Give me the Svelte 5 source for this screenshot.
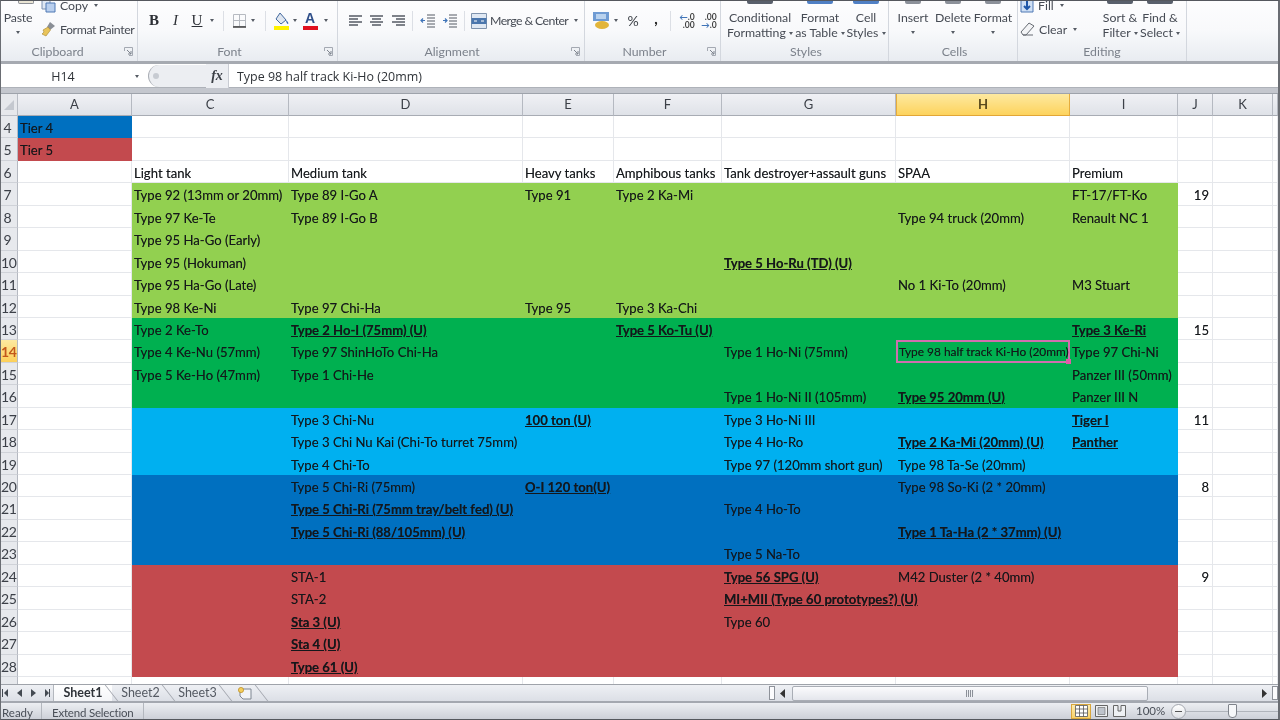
<script>
  const columns = ["A", "C", "D", "E", "F", "G", "H", "I", "J", "K", ""];

  // leading "!" means bold + underlined in the sheet
  const rows = [
    { n: 4, A: "Tier 4" },
    { n: 5, A: "Tier 5" },
    { n: 6, C: "Light tank", D: "Medium tank", E: "Heavy tanks", F: "Amphibous tanks", G: "Tank destroyer+assault guns", H: "SPAA", I: "Premium" },
    { n: 7, C: "Type 92 (13mm or 20mm)", D: "Type 89 I-Go A", E: "Type 91", F: "Type 2 Ka-Mi", I: "FT-17/FT-Ko", J: "19" },
    { n: 8, C: "Type 97 Ke-Te", D: "Type 89 I-Go B", H: "Type 94 truck (20mm)", I: "Renault NC 1" },
    { n: 9, C: "Type 95 Ha-Go (Early)" },
    { n: 10, C: "Type 95 (Hokuman)", G: "!Type 5 Ho-Ru (TD) (U)" },
    { n: 11, C: "Type 95 Ha-Go (Late)", H: "No 1 Ki-To (20mm)", I: "M3 Stuart" },
    { n: 12, C: "Type 98 Ke-Ni", D: "Type 97 Chi-Ha", E: "Type 95", F: "Type 3 Ka-Chi" },
    { n: 13, C: "Type 2 Ke-To", D: "!Type 2 Ho-I (75mm) (U)", F: "!Type 5 Ko-Tu (U)", I: "!Type 3 Ke-Ri", J: "15" },
    { n: 14, C: "Type 4 Ke-Nu (57mm)", D: "Type 97 ShinHoTo Chi-Ha", G: "Type 1 Ho-Ni (75mm)", H: "Type 98 half track Ki-Ho (20mm)", I: "Type 97 Chi-Ni" },
    { n: 15, C: "Type 5 Ke-Ho (47mm)", D: "Type 1 Chi-He", I: "Panzer III (50mm)" },
    { n: 16, G: "Type 1 Ho-Ni II (105mm)", H: "!Type 95 20mm (U)", I: "Panzer III N" },
    { n: 17, D: "Type 3 Chi-Nu", E: "!100 ton (U)", G: "Type 3 Ho-Ni III", I: "!Tiger I", J: "11" },
    { n: 18, D: "Type 3 Chi Nu Kai (Chi-To turret 75mm)", G: "Type 4 Ho-Ro", H: "!Type 2 Ka-Mi (20mm) (U)", I: "!Panther" },
    { n: 19, D: "Type 4 Chi-To", G: "Type 97 (120mm short gun)", H: "Type 98 Ta-Se (20mm)" },
    { n: 20, D: "Type 5 Chi-Ri (75mm)", E: "!O-I 120 ton(U)", H: "Type 98 So-Ki (2 * 20mm)", J: "8" },
    { n: 21, D: "!Type 5 Chi-Ri (75mm tray/belt fed) (U)", G: "Type 4 Ho-To" },
    { n: 22, D: "!Type 5 Chi-Ri (88/105mm) (U)", H: "!Type 1 Ta-Ha (2 * 37mm) (U)" },
    { n: 23, G: "Type 5 Na-To" },
    { n: 24, D: "STA-1", G: "!Type 56 SPG (U)", H: "M42 Duster (2 * 40mm)", J: "9" },
    { n: 25, D: "STA-2", G: "!MI+MII (Type 60 prototypes?) (U)" },
    { n: 26, D: "!Sta 3 (U)", G: "Type 60" },
    { n: 27, D: "!Sta 4 (U)" },
    { n: 28, D: "!Type 61 (U)" },
    { n: 29 }
  ];

  const filled = ["C", "D", "E", "F", "G", "H", "I"];

  function band(n) {
    if (n >= 7 && n <= 12) return "lime";
    if (n >= 13 && n <= 16) return "green";
    if (n >= 17 && n <= 19) return "sky";
    if (n >= 20 && n <= 23) return "blue";
    if (n >= 24 && n <= 28) return "red";
    return "";
  }

  function fillFor(row, col) {
    if (col === "A" && row.n === 4) return "blue";
    if (col === "A" && row.n === 5) return "red";
    return filled.includes(col) ? band(row.n) : "";
  }

  const bold = (t) => t && t.startsWith("!");
  const plain = (t) => (t ? t.replace(/^!/, "") : "");
</script>

{#snippet launcher()}
  <svg class="launcher" width="9" height="9" viewBox="0 0 9 9">
    <path d="M.5 4V.5H8.5V8.5H5" fill="none" stroke="#a4a9b2" />
    <path d="M3 3 7 7M7 4V7H4" fill="none" stroke="#7d838d" />
  </svg>
{/snippet}

{#snippet lines(kind)}
  <svg width="15" height="14" viewBox="0 0 15 14" stroke="#555b64" stroke-width="1.3">
    {#if kind === "left"}
      <path d="M1 2H14M1 5H10M1 8H14M1 11H10" />
    {:else if kind === "center"}
      <path d="M1 2H14M3 5H12M1 8H14M3 11H12" />
    {:else}
      <path d="M1 2H14M5 5H14M1 8H14M5 11H14" />
    {/if}
  </svg>
{/snippet}

{#snippet indent(flip)}
  <svg width="16" height="15" viewBox="0 0 16 15" stroke="#555b64" stroke-width="1.2">
    <path d="M7 2H15M7 5H15M7 8H15M7 11H15M7 14H15" />
    <path d={flip ? "M1 7.5H5M3 5.5 5 7.5 3 9.5" : "M5 7.5H1M3 5.5 1 7.5 3 9.5"} fill="none" stroke="#3f74b8" />
  </svg>
{/snippet}

{#snippet arrow()}
  <i class="caret"></i>
{/snippet}

<div class="app">
  <div class="ribbon">
    <section class="group clipboard">
      <div class="tools">
        <div class="big paste">
          <span class="stub paste-stub"></span>
          <span>Paste</span>
          {@render arrow()}
        </div>
        <div class="stack">
          <div class="line">
            <svg width="15" height="15" viewBox="0 0 15 15"><path d="M1 1H9V11H1Z" fill="#dfe7f3" stroke="#7a8fb0" /><path d="M5 5H14V14H5Z" fill="#b9cfee" stroke="#4f78b4" /></svg>
            <span>Copy</span>{@render arrow()}
          </div>
          <div class="line">
            <svg width="15" height="16" viewBox="0 0 15 16"><path d="M9 1 14 5 9 9 6 6Z" fill="#8a8f96" /><path d="M7 6 9.5 9 5 15 1 13 3 11 2 9Z" fill="#e9c45a" stroke="#a58430" stroke-width=".6" /></svg>
            <span class="painter">Format Painter</span>
          </div>
        </div>
      </div>
      <footer>Clipboard{@render launcher()}</footer>
    </section>

    <section class="group font">
      <div class="tools row">
        <b class="glyph bold">B</b>
        <i class="glyph italic">I</i>
        <u class="glyph under">U</u>
        {@render arrow()}
        <span class="sep"></span>
        <svg width="15" height="15" viewBox="0 0 15 15"><path d="M1.500 1.500H13.500V13.500H1.500ZM7.500 1.500V13.500M1.500 7.500H13.500" fill="none" stroke="#b6bac1" /><path d="M1 14H14" stroke="#333" stroke-width="1.4" /></svg>
        {@render arrow()}
        <span class="sep"></span>
        <svg width="17" height="18" viewBox="0 0 17 18"><path d="M7 1 13 8 8 12 3 7Z" fill="#dfe6f0" stroke="#43699f" /><path d="M13 8C15 10 16 11 15 12 14 12 13 10 13 8Z" fill="#3e6bb0" /><path d="M1 14H16V18H1Z" fill="#fff200" /></svg>
        {@render arrow()}
        <span class="font-color"><span>A</span><i></i></span>
        {@render arrow()}
      </div>
      <footer>Font{@render launcher()}</footer>
    </section>

    <section class="group align">
      <div class="tools row">
        {@render lines("left")}
        {@render lines("center")}
        {@render lines("right")}
        <span class="sep"></span>
        {@render indent(false)}
        {@render indent(true)}
        <span class="sep"></span>
        <svg width="16" height="16" viewBox="0 0 16 16"><path d="M.5 .5H15.500V15.500H.5Z" fill="#dfe8f3" stroke="#7f93ad" /><path d="M.5 5H15.500V11H.5Z" fill="#4a76ad" /><path d="M3 8H6M13 8H10" stroke="#fff" /></svg>
        <span class="merge">Merge &amp; Center</span>
        {@render arrow()}
      </div>
      <footer>Alignment{@render launcher()}</footer>
    </section>

    <section class="group number">
      <div class="tools row">
        <svg width="17" height="19" viewBox="0 0 17 19"><path d="M0 1H16V10H0Z" fill="#6f9bd3" /><path d="M3 3H13V8H3Z" fill="#b9d2ee" /><ellipse cx="9" cy="14" rx="7" ry="4" fill="#e2b53b" /></svg>
        {@render arrow()}
        <span class="pct">%</span>
        <b class="comma">,</b>
        <span class="sep"></span>
        <span class="dec"><span><em>←</em>.0</span><span>.00</span></span>
        <span class="dec"><span>.00</span><span><em>→</em>.0</span></span>
      </div>
      <footer>Number{@render launcher()}</footer>
    </section>

    <section class="group styles">
      <div class="tools bigs">
        <div class="big cond"><span class="stub dark"></span><span>Conditional</span><span>Formatting {@render arrow()}</span></div>
        <div class="big table"><span class="stub bluebit"></span><span>Format</span><span>as Table {@render arrow()}</span></div>
        <div class="big cellst"><span class="stub bluebit"></span><span>Cell</span><span>Styles {@render arrow()}</span></div>
      </div>
      <footer>Styles</footer>
    </section>

    <section class="group cells">
      <div class="tools bigs">
        <div class="big c-btn"><span class="stub greybit"></span><span>Insert</span>{@render arrow()}</div>
        <div class="big c-btn"><span class="stub greybit"></span><span>Delete</span>{@render arrow()}</div>
        <div class="big c-btn"><span class="stub greybit"></span><span>Format</span>{@render arrow()}</div>
      </div>
      <footer>Cells</footer>
    </section>

    <section class="group editing">
      <div class="tools split">
        <div class="stack">
          <div class="line">
            <svg width="14" height="15" viewBox="0 0 14 15"><path d="M1 1H13V14H1Z" fill="#cfe0f5" stroke="#4f78b4" /><path d="M7 3V11M4 8 7 11 10 8" fill="none" stroke="#1f57a8" stroke-width="2" /></svg>
            <span>Fill</span>{@render arrow()}
          </div>
          <div class="line">
            <svg width="15" height="14" viewBox="0 0 15 14"><path d="M9 1 14 4 6 13H3L1 10Z" fill="#f3f4f6" stroke="#666b73" /><path d="M3 13H13" stroke="#666b73" /></svg>
            <span>Clear</span>{@render arrow()}
          </div>
        </div>
        <div class="big sort"><span class="stub dark"></span><span>Sort &amp;</span><span>Filter {@render arrow()}</span></div>
        <div class="big find"><span class="stub dark"></span><span>Find &amp;</span><span>Select {@render arrow()}</span></div>
      </div>
      <footer>Editing</footer>
    </section>
  </div>

  <div class="formula">
    <div class="namebox">H14</div>
    {@render arrow()}
    <div class="pill"><span class="dot"></span></div>
    <span class="fx">fx</span>
    <div class="content">Type 98 half track Ki-Ho (20mm)</div>
  </div>

  <div class="grid head">
    <div class="corner"><svg width="12" height="12" viewBox="0 0 12 12"><path d="M11 1V11H1Z" fill="#c4c8cf" /></svg></div>
    {#each columns as col}
      <div class="col-head" class:selected={col === "H"}>{col}</div>
    {/each}
  </div>

  <div class="grid sheet">
    {#each rows as row}
      <div class="row-head" class:selected={row.n === 14}>{row.n === 29 ? "" : row.n}</div>
      {#each columns as col}
        <div
          class="cell {fillFor(row, col)}"
          class:num={col === "J"}
          class:strong={bold(row[col])}
          class:active={row.n === 14 && col === "H"}
        ><span>{plain(row[col])}</span></div>
      {/each}
    {/each}
  </div>

  <div class="tabbar">
    <div class="nav">
      <svg width="48" height="10" viewBox="0 0 48 10" fill="#444a52">
        <path d="M0 1H1V9H0ZM6 1V9L2 5ZM20 1V9L15 5ZM29 1V9L34 5ZM43 1V9L47 5ZM47 1H48V9H47Z" />
      </svg>
    </div>
    <div class="tab current">Sheet1</div>
    <div class="tab">Sheet2</div>
    <div class="tab">Sheet3</div>
    <div class="tab newsheet">
      <svg width="15" height="14" viewBox="0 0 15 14"><path d="M3 3H14V13H6L3 10Z" fill="#f1f3f7" stroke="#7f8691" /><circle cx="4" cy="4" r="2.6" fill="#f3cd5b" stroke="#b98a21" stroke-width=".7" /></svg>
    </div>
    <div class="spacer"></div>
    <span class="grabber"></span>
    <svg class="scroll-arrow" width="6" height="9" viewBox="0 0 6 9"><path d="M5 0V9L0 4.5Z" fill="#333" /></svg>
    <div class="thumb"><span class="grip"></span></div>
    <div class="track"></div>
    <svg class="scroll-arrow" width="6" height="9" viewBox="0 0 6 9"><path d="M0 0V9L5 4.5Z" fill="#333" /></svg>
    <span class="grabber end"></span>
  </div>

  <div class="status">
    <span class="st first">Ready</span>
    <span class="st second">Extend Selection</span>
    <div class="spacer"></div>
    <span class="view on">
      <svg width="13" height="12" viewBox="0 0 13 12"><path d="M.5 .5H12.500V11.500H.5ZM.5 4H12.500M.5 8H12.500M4.500 .5V11.500M8.500 .5V11.500" fill="#fff" stroke="#555" stroke-width=".8" /></svg>
    </span>
    <span class="view">
      <svg width="13" height="12" viewBox="0 0 13 12"><path d="M.5 .5H12.500V11.500H.5Z" fill="#eef0f3" stroke="#666" /><path d="M3 2.500H10V9.500H3Z" fill="#bfc4cc" stroke="#666" stroke-width=".6" /></svg>
    </span>
    <span class="view">
      <svg width="13" height="12" viewBox="0 0 13 12"><path d="M.5 .5H5V6H8V.5H12.500V11.500H.5Z" fill="#eef0f3" stroke="#666" /></svg>
    </span>
    <span class="zoom">100%</span>
    <span class="minus"></span>
    <div class="slider"><span class="knob"></span></div>
  </div>
</div>

<style>
  :global(body) {
    margin: 0;
    background: #fff;
  }

  .app {
    box-sizing: border-box;
    width: 1280px;
    height: 720px;
    display: flex;
    flex-direction: column;
    overflow: hidden;
    border-top: 1px solid #55585e;
    border-left: 1px solid #6a6d73;
    border-right: 2px solid #6a6d73;
    border-bottom: 1px solid #55585e;
    background: #fff;
    font-family: "Lato", "Open Sans", sans-serif;
    color: #111;
    filter: blur(0.55px);
  }

  /* ribbon */
  .ribbon {
    flex: none;
    height: 60px;
    display: flex;
    background: linear-gradient(#fdfdfe, #f8f9fb 50%, #e9ecf1);
    border-bottom: 3px solid #a6aab1;
    font-size: 12.300px;
    color: #464b54;
  }

  .group {
    box-sizing: border-box;
    flex: none;
    display: flex;
    flex-direction: column;
    border-right: 1px solid #d3d7de;
  }

  .clipboard { width: 137px; }
  .font { width: 200px; }
  .align { width: 247px; }
  .number { width: 136px; }
  .styles { width: 168px; }
  .cells { width: 129px; }
  .editing { width: 169px; }

  .tools {
    height: 43px;
    overflow: hidden;
    display: flex;
    flex: none;
  }

  .group footer {
    height: 15px;
    line-height: 15px;
    display: flex;
    justify-content: center;
    color: #7b818b;
    position: relative;
  }

  .clipboard footer { padding-right: 23px; }
  .font footer { padding-right: 16px; }
  .align footer { padding-right: 18px; }
  .number footer { padding-right: 16px; }
  .styles footer { padding-left: 3px; }
  .cells footer { padding-left: 3px; }

  .launcher {
    position: absolute;
    right: 4px;
    top: 3px;
  }

  .caret {
    display: inline-block;
    flex: none;
    width: 0;
    height: 0;
    border-left: 2.500px solid transparent;
    border-right: 2.500px solid transparent;
    border-top: 3px solid #555b64;
    vertical-align: middle;
  }

  .big {
    flex: none;
    display: flex;
    flex-direction: column;
    align-items: center;
    line-height: 14.500px;
    white-space: nowrap;
  }

  .stub {
    height: 3px;
    width: 26px;
    margin-bottom: 7px;
    border-radius: 0 0 2px 2px;
  }

  .paste-stub {
    width: 14px;
    margin-left: 16px;
    background: #e9e4d4;
    border: 1px solid #8c8f95;
    border-top: 0;
    height: 2px;
  }

  .dark { background: #59606c; }
  .bluebit { background: #4f7fc4; }
  .greybit { background: #8b9099; width: 16px; }

  .paste {
    width: 34px;
    letter-spacing: -0.2px;
  }

  .paste .caret {
    margin-top: 5px;
  }

  .stack {
    display: flex;
    flex-direction: column;
    margin-top: -8px;
    margin-left: 6px;
  }

  .line {
    height: 24px;
    display: flex;
    align-items: center;
    gap: 4px;
    white-space: nowrap;
  }

  .line .caret { margin-left: 2px; }

  .painter { letter-spacing: -0.4px; }

  /* icon rows: columns are sized so each tool sits at its ribbon slot */
  .row {
    display: grid;
    align-items: center;
    justify-items: center;
    height: 39px;
    margin-bottom: 4px;
    grid-template-rows: 39px;
  }

  .font .row {
    padding-left: 5px;
    grid-template-columns: 22px 21px 22px 8px 14px 18px 10px 14px 18px 9px 22px 10px;
  }

  .align .row {
    padding-left: 8px;
    grid-template-columns: 18px 24px 20px 8px 24px 20px 8px 22px 82px 8px;
  }

  .number .row {
    padding-left: 7px;
    grid-template-columns: 18px 12px 22px 24px 4px 30px 14px;
  }

  .sep {
    width: 1px;
    height: 20px;
    background: #dcdfe5;
  }

  .glyph {
    font-family: "Liberation Serif", serif;
    font-size: 15px;
    color: #2c2f35;
  }

  .font-color {
    width: 17px;
    display: flex;
    flex-direction: column;
    align-items: center;
    font-family: "Liberation Sans", sans-serif;
    font-weight: 700;
    font-size: 14px;
    line-height: 13px;
    color: #2f4f8a;
  }

  .font-color i {
    display: block;
    width: 15px;
    height: 4px;
    background: #e0101e;
    margin-top: 1px;
  }

  .merge {
    justify-self: start;
    white-space: nowrap;
    letter-spacing: -0.6px;
  }

  .pct {
    font-size: 14px;
    color: #3c4047;
  }

  .comma {
    font-size: 15px;
    color: #222;
    margin-top: -6px;
  }

  .dec {
    display: flex;
    flex-direction: column;
    align-items: flex-end;
    font-size: 8.500px;
    line-height: 8px;
    font-weight: 700;
    color: #444;
  }

  .dec em {
    font-style: normal;
    color: #3f74b8;
  }

  .cond { width: 78px; }
  .table { width: 42px; }
  .cellst { width: 50px; }
  .c-btn { width: 40px; }
  .c-btn .caret { margin-top: 5px; }
  .cells .bigs { padding-left: 4px; }

  .split .stack { margin-left: 2px; width: 80px; }
  .sort { width: 40px; }
  .find { width: 40px; }

  /* formula bar */
  .formula {
    flex: none;
    height: 24px;
    display: flex;
    align-items: center;
    background: #fff;
    border-bottom: 5px solid #c4c7ce;
    box-shadow: inset 0 -1px 0 #aeb2b9;
    font-family: "Open Sans", "Noto Sans", sans-serif;
    font-size: 12.500px;
    color: #2f3338;
  }

  .namebox {
    width: 134px;
    padding-right: 10px;
    box-sizing: border-box;
    text-align: center;
  }

  .pill {
    width: 57px;
    height: 22px;
    margin-left: 9px;
    background: #eceef2;
    border-radius: 11px 0 0 11px;
    border-left: 1px solid #a9adb4;
    display: flex;
    align-items: center;
  }

  .dot {
    width: 6px;
    height: 6px;
    margin-left: 4px;
    border-radius: 50%;
    background: #c7cbd2;
  }

  .fx {
    width: 23px;
    height: 24px;
    line-height: 24px;
    box-sizing: border-box;
    border-right: 1px solid #c9ccd3;
    background: #eceef2;
    font-family: "Liberation Serif", serif;
    font-style: italic;
    font-weight: 700;
    font-size: 14px;
    color: #3b3f46;
    text-align: center;
  }

  .content {
    padding-left: 8px;
    font-size: 12.450px;
    white-space: nowrap;
  }

  /* grid */
  .grid {
    display: grid;
    grid-template-columns: 17px 114px 157px 234px 91px 108px 174px 174px 108px 35px 60px 5px;
  }

  .head {
    flex: none;
    height: 23px;
    border-top: 1px solid #9ea3ab;
    box-sizing: border-box;
  }

  .corner {
    background: #e6e8ec;
    border-right: 1px solid #b9bdc5;
    border-bottom: 1px solid #b9bdc5;
    display: flex;
    align-items: center;
    justify-content: center;
  }

  .col-head {
    background: linear-gradient(#f0f1f5, #dfe2e8);
    border-right: 1px solid #b5b9c1;
    border-bottom: 1px solid #a8acb4;
    font-size: 13px;
    line-height: 21px;
    text-align: center;
    color: #3c4048;
  }

  .col-head.selected {
    background: linear-gradient(#fde9a0, #fdd35d);
    border-right-color: #e5ac3c;
    border-left: 1px solid #e5ac3c;
    border-bottom-color: #e2a636;
    color: #5a4a1c;
    font-weight: 700;
  }

  .sheet {
    flex: 1;
    min-height: 0;
    overflow: hidden;
    grid-auto-rows: 22.450px;
    font-size: 13.100px;
  }

  .row-head {
    background: #e7e9ed;
    border-right: 1px solid #b5b9c1;
    border-bottom: 1px solid #cfd2d8;
    box-sizing: border-box;
    padding-right: 3px;
    line-height: 23px;
    text-align: center;
    color: #3c4048;
    letter-spacing: -0.3px;
    font-size: 14px;
    overflow: hidden;
  }

  .row-head.selected {
    background: linear-gradient(#fde9a0, #fcd05a);
    color: #c2571a;
    font-weight: 700;
  }

  .cell {
    box-sizing: border-box;
    min-width: 0;
    padding: 0 0 0 2px;
    border-right: 1px solid #e5e7eb;
    border-bottom: 1px solid #e5e7eb;
    line-height: 24px;
    white-space: nowrap;
    color: #14171b;
  }

  /* long text spills over the next cell's fill, as it does in the sheet */
  .cell span {
    position: relative;
    z-index: 1;
    text-shadow: 0 0 0.6px rgba(0, 0, 0, 0.45);
  }

  .cell.num {
    text-align: right;
    padding-right: 3px;
  }

  .cell.strong span {
    font-weight: 700;
    text-decoration: underline;
  }

  .cell.lime, .cell.green, .cell.sky, .cell.blue, .cell.red {
    border-color: transparent;
  }

  .cell.lime { background: #92d050; }
  .cell.green { background: #00b050; }
  .cell.sky { background: #00b0f0; }
  .cell.blue { background: #0070c0; }
  .cell.red { background: #c34a4e; }

  .cell.active {
    outline: 2px solid #cf6fae;
    outline-offset: -2px;
    font-size: 11.900px;
    padding-left: 3px;
    line-height: 24px;
    position: relative;
  }

  .cell.active::after {
    content: "";
    position: absolute;
    right: -2px;
    bottom: -2px;
    width: 5px;
    height: 5px;
    background: #e05aa8;
  }

  /* sheet tabs and scrollbar */
  .tabbar {
    flex: none;
    box-sizing: border-box;
    height: 19px;
    display: flex;
    align-items: center;
    border-top: 1px solid #9fa3aa;
    border-bottom: 2px solid #a4a8b0;
    background: linear-gradient(#eef0f4, #dcdfe6);
    font-size: 12.500px;
    color: #555a63;
  }

  .nav {
    width: 53px;
    padding-left: 1px;
    display: flex;
    align-items: center;
    box-sizing: border-box;
  }

  .tab {
    position: relative;
    height: 16px;
    line-height: 16px;
    width: 57px;
    text-align: center;
    flex: none;
  }

  .tab::after {
    content: "";
    position: absolute;
    right: 0;
    top: 0;
    bottom: 0;
    width: 1px;
    background: #a1a5ad;
    transform: skewX(38deg);
  }

  .tab.current {
    background: linear-gradient(#fff, #f4f5f8);
    font-weight: 700;
    color: #2f3339;
    width: 58px;
    box-shadow: -1px 0 0 #b3b7be;
  }

  .newsheet {
    width: 36px;
    display: flex;
    align-items: center;
    justify-content: center;
  }

  .spacer { flex: 1; }

  .grabber {
    flex: none;
    width: 4px;
    height: 12px;
    margin-right: 5px;
    background: #fbfbfd;
    border: 1px solid #8e929a;
  }

  .grabber.end {
    margin: 0 0 0 4px;
  }

  .scroll-arrow { flex: none; }

  .thumb {
    flex: none;
    width: 356px;
    height: 15px;
    margin-left: 6px;
    box-sizing: border-box;
    background: linear-gradient(#fbfbfd, #e4e6ec);
    border: 1px solid #a9adb5;
    border-radius: 2px;
    display: flex;
    align-items: center;
    justify-content: center;
  }

  .grip {
    width: 8px;
    height: 7px;
    background: repeating-linear-gradient(90deg, #8c9098 0 1px, #eceef2 1px 2px);
  }

  .track {
    flex: none;
    width: 114px;
  }

  /* status bar */
  .status {
    flex: none;
    height: 16px;
    display: flex;
    align-items: center;
    background: linear-gradient(#eceef2, #cdd0d8);
    font-size: 11.500px;
    color: #4a4f58;
  }

  .st {
    height: 100%;
    line-height: 16px;
    padding: 2px 8px 0 1px;
    box-sizing: border-box;
    border-right: 1px solid #b3b7be;
    white-space: nowrap;
  }

  .st.second {
    padding: 2px 9px 0 10px;
    letter-spacing: -0.2px;
  }

  .view {
    flex: none;
    width: 18px;
    height: 15px;
    display: flex;
    align-items: center;
    justify-content: center;
  }

  .view.on {
    width: 20px;
    background: linear-gradient(#fdeeb4, #f8cf62);
    box-shadow: inset 0 0 0 1px #d9a63c;
    margin-right: 1px;
  }

  .zoom {
    margin-left: 8px;
    width: 34px;
    font-size: 11.500px;
    line-height: 16px;
  }

  .minus {
    flex: none;
    width: 13px;
    height: 13px;
    border-radius: 50%;
    background: linear-gradient(#fff, #dfe1e6);
    border: 1px solid #a2a6ae;
    position: relative;
    margin-left: 1px;
  }

  .minus::after {
    content: "";
    position: absolute;
    left: 3px;
    right: 3px;
    top: 6px;
    height: 1.500px;
    background: #555;
  }

  .slider {
    flex: none;
    width: 92px;
    height: 1px;
    background: #b0b4bb;
    position: relative;
  }

  .knob {
    position: absolute;
    left: 42px;
    top: -7px;
    width: 7px;
    height: 12px;
    background: #f6f7f9;
    border: 1px solid #7f838b;
    border-radius: 1px 1px 4px 4px;
  }
</style>
